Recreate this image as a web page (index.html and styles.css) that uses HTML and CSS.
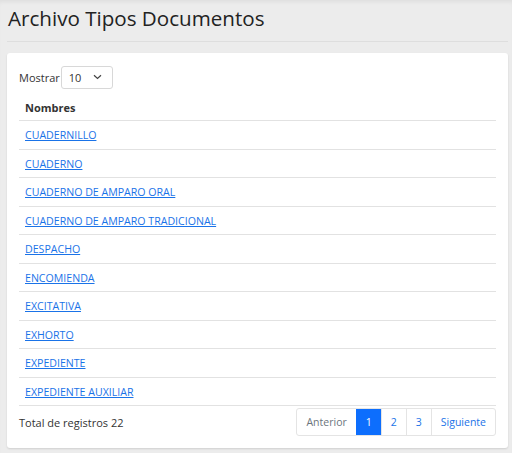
FILE: index.html
```html
<!DOCTYPE html>
<html lang="es">
<head>
<meta charset="utf-8">
<title>Archivo Tipos Documentos</title>
<link rel="stylesheet" href="styles.css">
</head>
<body>
<div class="page">
  <h1 class="title">Archivo Tipos Documentos</h1>
  <hr class="divider">
  <div class="card">
    <div class="length">
      <span>Mostrar</span>
      <div class="select">
        <span>10</span>
        <svg width="9" height="6" viewBox="0 0 9 6"><path d="M1 1.2l3.5 3.3 3.5-3.3" fill="none" stroke="#444" stroke-width="1.2"/></svg>
      </div>
    </div>
    <table class="table">
      <thead><tr><th>Nombres</th></tr></thead>
      <tbody>
        <tr><td><a href="#">CUADERNILLO</a></td></tr>
        <tr><td><a href="#">CUADERNO</a></td></tr>
        <tr><td><a href="#">CUADERNO DE AMPARO ORAL</a></td></tr>
        <tr><td><a href="#">CUADERNO DE AMPARO TRADICIONAL</a></td></tr>
        <tr><td><a href="#">DESPACHO</a></td></tr>
        <tr><td><a href="#">ENCOMIENDA</a></td></tr>
        <tr><td><a href="#">EXCITATIVA</a></td></tr>
        <tr><td><a href="#">EXHORTO</a></td></tr>
        <tr><td><a href="#">EXPEDIENTE</a></td></tr>
        <tr><td><a href="#">EXPEDIENTE AUXILIAR</a></td></tr>
      </tbody>
    </table>
    <div class="footer">
      <span class="total">Total de registros 22</span>
      <ul class="pagination">
        <li class="pg disabled">Anterior</li>
        <li class="pg active">1</li>
        <li class="pg">2</li>
        <li class="pg">3</li>
        <li class="pg">Siguiente</li>
      </ul>
    </div>
  </div>
</div>
</body>
</html>
```
FILE: styles.css
```css
html, body {
  margin: 0;
  padding: 0;
}
body {
  background: #ececec;
  font-family: "Open Sans", "Noto Sans", sans-serif;
  color: #333;
  box-shadow: inset 0 4px 4px -2px rgba(0,0,0,0.06);
  min-height: 453px;
}
.page {
  padding: 0 4px 0 7px;
}
.title {
  margin: 0;
  padding: 3px 0 0 1px;
  font-size: 20.6px;
  font-weight: 400;
  line-height: 30px;
  color: #222;
}
.divider {
  border: 0;
  border-top: 1px solid #dedede;
  margin: 8px 0 11px 0;
}
.card {
  background: #fff;
  border-radius: 3px;
  box-shadow: 0 1px 2px rgba(0,0,0,0.12);
  padding: 12px 12px 12px 12px;
  font-size: 11px;
}
.length {
  display: flex;
  align-items: center;
  gap: 1px;
  height: 24px;
}
.select {
  height: 23px;
  border: 1px solid #d8d8d8;
  border-radius: 3px;
  display: flex;
  align-items: center;
  justify-content: space-between;
  padding: 0 10px 0 7px;
  box-sizing: border-box;
  width: 52px;
  font-size: 11px;
}
.table {
  width: 100%;
  border-collapse: collapse;
  margin-top: 6px;
}
.table th {
  text-align: left;
  font-weight: 700;
  padding: 5px 6px 5px 6px;
  border-bottom: 1px solid #e2e2e2;
  height: 15px;
}
.table td {
  padding: 0 6px;
  height: 27.5px;
  border-bottom: 1px solid #e2e2e2;
}
.table a {
  color: #1a73e8;
  text-decoration: underline;
  font-size: 10.6px;
}
.footer {
  display: flex;
  justify-content: space-between;
  align-items: center;
  padding-top: 2px;
}
.pagination {
  display: flex;
  list-style: none;
  margin: 0;
  padding: 0;
  border: 1px solid #e4e4e4;
  border-radius: 3px;
  overflow: hidden;
  font-size: 10.5px;
}
.pg {
  height: 26px;
  line-height: 26px;
  padding: 0 9px;
  color: #1a73e8;
  border-left: 1px solid #e4e4e4;
}
.pg:first-child { border-left: 0; }
.pg.disabled { color: #6c757d; }
.pg.active { background: #0d6efd; color: #fff; border-left-color: #0d6efd; }
```
